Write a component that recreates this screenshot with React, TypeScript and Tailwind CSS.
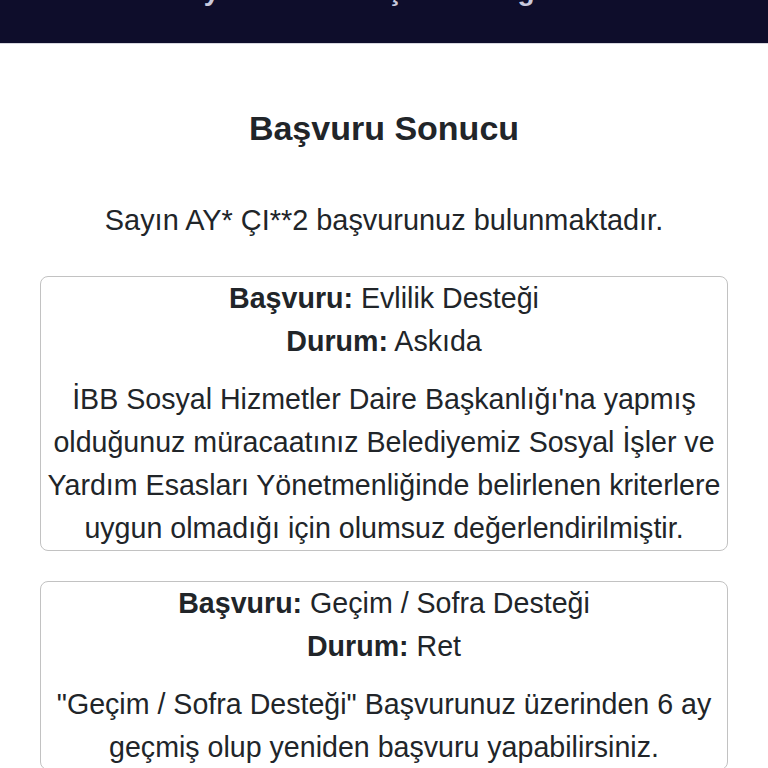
export default function App() {
  return (
    <div className="min-h-screen bg-white text-[#212529]" style={{ fontFamily: '"Liberation Sans", Arial, sans-serif' }}>
      <header className="h-[44px] overflow-hidden bg-[#0e0d2b] border-b border-[#d6d6de]">
        <div className="-mt-[22px] text-center text-[28px] font-bold leading-[26px] text-[#c9c9dd]">
          Sosyal Yardım Başvuru Sorgulama
        </div>
      </header>
      <main className="px-[40px]">
        <h1 className="mt-[64px] text-center text-[34px] font-bold leading-[40px]">Başvuru Sonucu</h1>
        <p className="mt-[52px] text-center text-[28.9px] leading-[40px]">Sayın AY* ÇI**2 başvurunuz bulunmaktadır.</p>
        <div className="mt-[36px] flex flex-col gap-[30px]">
          <div className="rounded-[8px] border border-[#c2c2c2] text-center text-[28.6px] leading-[43px]">
            <div><span className="font-bold">Başvuru:</span> Evlilik Desteği</div>
            <div><span className="font-bold">Durum:</span> Askıda</div>
            <p className="mt-[15px] whitespace-nowrap">
              İBB Sosyal Hizmetler Daire Başkanlığı'na yapmış
              <br />
              olduğunuz müracaatınız Belediyemiz Sosyal İşler ve
              <br />
              Yardım Esasları Yönetmenliğinde belirlenen kriterlere
              <br />
              uygun olmadığı için olumsuz değerlendirilmiştir.
            </p>
          </div>
          <div className="rounded-[8px] border border-[#c2c2c2] text-center text-[28.6px] leading-[43px]">
            <div><span className="font-bold">Başvuru:</span> Geçim / Sofra Desteği</div>
            <div><span className="font-bold">Durum:</span> Ret</div>
            <p className="mt-[15px] whitespace-nowrap">
              "Geçim / Sofra Desteği" Başvurunuz üzerinden 6 ay
              <br />
              geçmiş olup yeniden başvuru yapabilirsiniz.
            </p>
          </div>
        </div>
      </main>
    </div>
  );
}
